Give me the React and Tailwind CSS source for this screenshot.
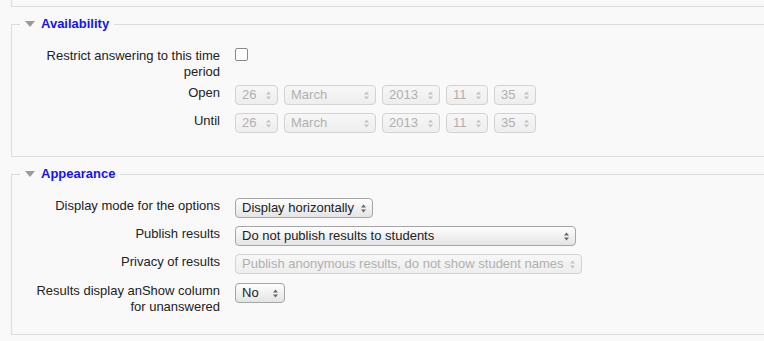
import React from "react";
import clsx from "clsx";

const Arrows = ({ disabled }) => (
  <svg width="7" height="11" viewBox="0 0 7 11" className="shrink-0">
    <path d="M1 4.5 L3.5 1.5 L6 4.5Z" fill={disabled ? "#c4c4c4" : "#666"} />
    <path d="M1 6.5 L3.5 9.5 L6 6.5Z" fill={disabled ? "#c4c4c4" : "#666"} />
  </svg>
);

const Select = ({ text, disabled, className }) => (
  <div
    className={clsx(
      "flex h-[20px] items-center justify-between rounded-[4px] border pl-[6px] pr-[5px] text-[13px] leading-[16px] whitespace-nowrap",
      disabled
        ? "border-[#d2d2d2] bg-linear-to-b from-[#f7f7f7] to-[#eeeeee] text-[#b0b0b0]"
        : "border-[#a6a6a6] bg-linear-to-b from-[#fefefe] to-[#e4e4e4] text-[#222]",
      className
    )}
  >
    <span>{text}</span>
    <Arrows disabled={disabled} />
  </div>
);

const Row = ({ label, children, className }) => (
  <div className={clsx("flex items-start", className)}>
    <div className="ml-[8px] w-[192px] shrink-0 pt-[1px] text-right text-[13px] leading-[16px] text-[#222]">
      {label}
    </div>
    <div className="ml-[15px] mt-[1px]">{children}</div>
  </div>
);

const Legend = ({ children }) => (
  <legend className="px-[5px]">
    <span className="flex items-center gap-[6px] text-[13px] font-bold leading-[16px] text-[#1414f0]">
      <svg width="10" height="6" viewBox="0 0 10 6">
        <path d="M0 0 L10 0 L5 6Z" fill="#9a9a9a" />
      </svg>
      {children}
    </span>
  </legend>
);

const DateRow = () => (
  <div className="flex gap-[6px]">
    <Select text="26" disabled className="w-[43px]" />
    <Select text="March" disabled className="w-[92px]" />
    <Select text="2013" disabled className="w-[58px]" />
    <Select text="11" disabled className="w-[42px]" />
    <Select text="35" disabled className="w-[42px]" />
  </div>
);

export default function App() {
  return (
    <div
      className="h-[341px] w-[764px] overflow-hidden bg-[#f9f9f9]"
      style={{ fontFamily: '"Liberation Sans", Arial, sans-serif' }}
    >
      <div className="ml-[11px] h-[7px] border-b border-l border-[#dcdcdc]" />

      <fieldset className="ml-[11px] mt-[9px] border-b border-l border-t border-[#dcdcdc] pb-[23px] pl-[8px] pt-[15px]">
        <Legend>Availability</Legend>
        <Row label="Restrict answering to this time period" className="mb-[4px]">
          <div className="h-[13px] w-[13px] rounded-[2px] border border-[#8a8a8a] bg-white" />
        </Row>
        <Row label="Open" className="mb-[7px]">
          <DateRow />
        </Row>
        <Row label="Until">
          <DateRow />
        </Row>
      </fieldset>

      <fieldset className="ml-[11px] mt-[9px] border-b border-l border-t border-[#dcdcdc] pb-[19px] pl-[8px] pt-[15px]">
        <Legend>Appearance</Legend>
        <Row label="Display mode for the options" className="mb-[7px]">
          <Select text="Display horizontally" className="w-[138px]" />
        </Row>
        <Row label="Publish results" className="mb-[7px]">
          <Select text="Do not publish results to students" className="w-[341px]" />
        </Row>
        <Row label="Privacy of results" className="mb-[8px]">
          <Select
            text="Publish anonymous results, do not show student names"
            disabled
            className="w-[347px]"
          />
        </Row>
        <Row label="Results display anShow column for unanswered">
          <Select text="No" className="w-[50px]" />
        </Row>
      </fieldset>
    </div>
  );
}
